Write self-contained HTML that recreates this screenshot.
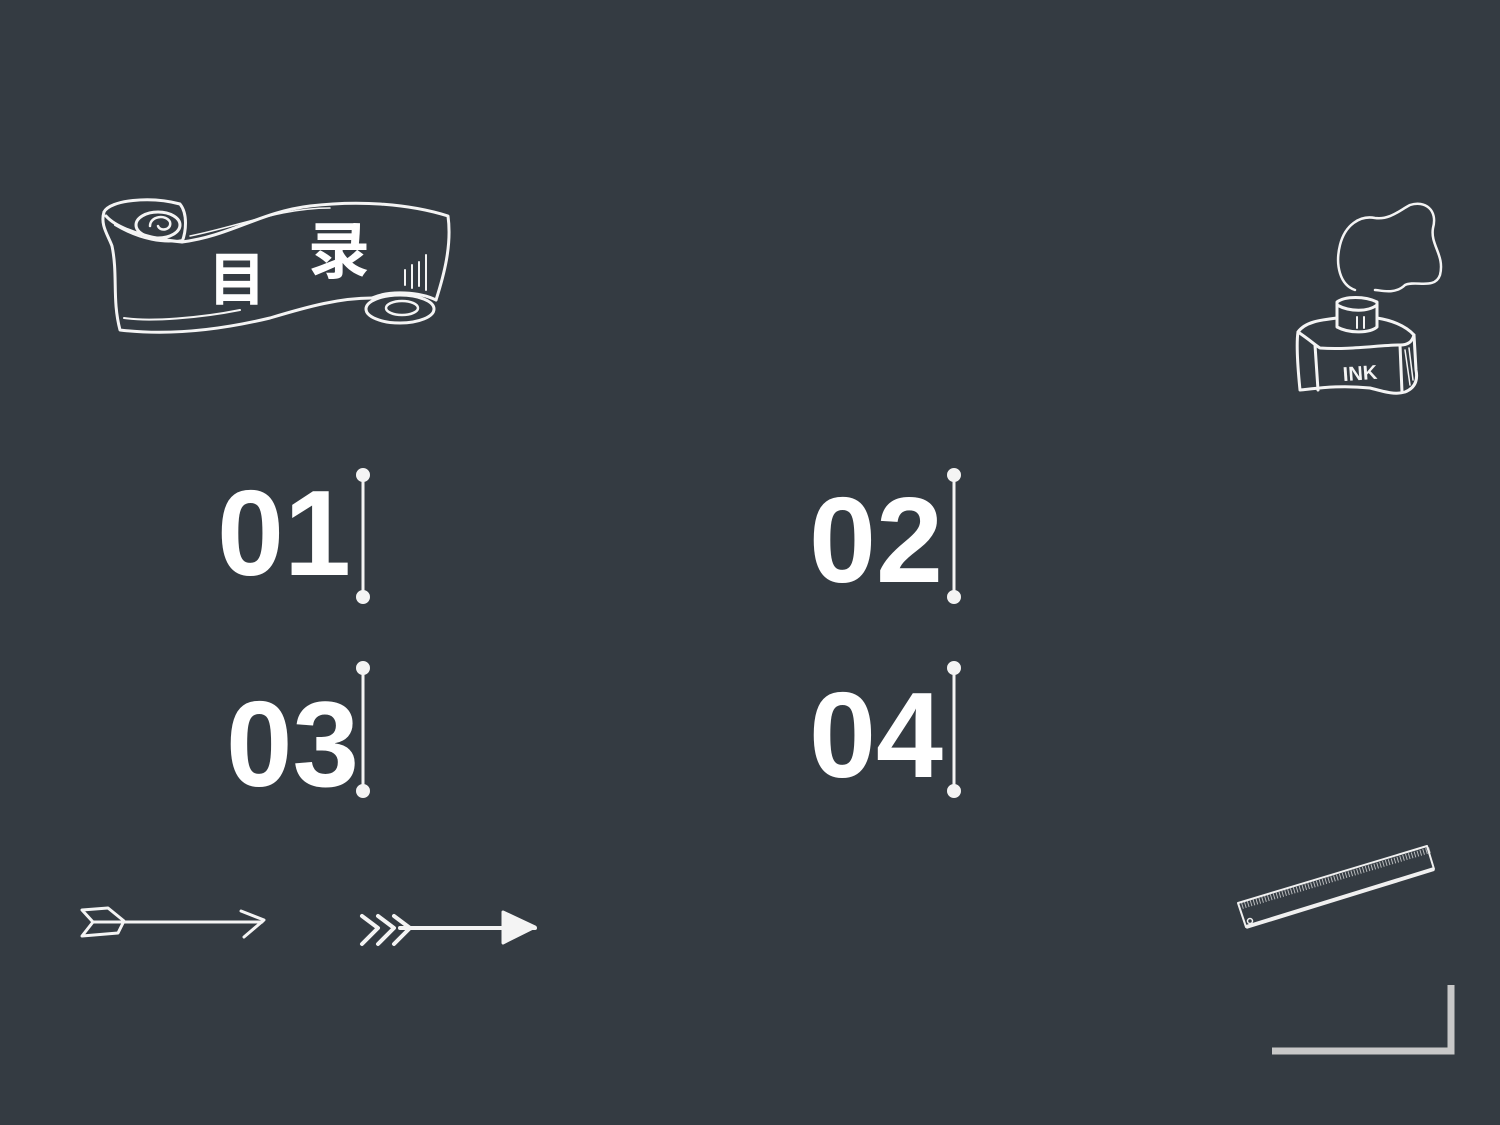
<!DOCTYPE html>
<html><head><meta charset="utf-8"><style>
html,body{margin:0;padding:0;background:#343b42;}
svg{display:block}
</style></head><body>
<svg width="1500" height="1125" viewBox="0 0 1500 1125" xmlns="http://www.w3.org/2000/svg">
<rect width="1500" height="1125" fill="#343b42"/>
<g fill="none" stroke="#f4f4f4" stroke-width="3" stroke-linecap="round" stroke-linejoin="round">
  <path d="M104 212 C 110 200 150 196 180 204 C 188 214 186 232 182 242 C 230 236 260 212 310 206 C 360 200 410 204 448 216 C 452 245 444 275 436 300"/>
  <path d="M104 212 C 100 225 108 235 112 246 C 118 275 112 300 120 330 C 170 336 220 330 270 318 C 310 306 340 298 372 298"/>
  <path d="M106 216 C 120 232 160 240 182 242"/>
  <path d="M115 225 C 140 240 165 244 183 240" stroke-width="2"/>
  <ellipse cx="158" cy="225" rx="22" ry="13"/>
  <path d="M150 226 C 150 216 166 214 170 222 C 172 230 160 232 158 226" stroke-width="2.5"/>
  <path d="M124 318 C 150 322 200 318 240 310" stroke-width="2"/>
  <ellipse cx="400" cy="309" rx="34" ry="14"/>
  <ellipse cx="402" cy="308" rx="16" ry="7" stroke-width="2.5"/>
  <path d="M372 298 C 390 290 420 292 436 300"/>
  <path d="M405 285 L405 270 M412 288 L412 265 M419 286 L419 262 M426 290 L426 255" stroke-width="2"/>
  <path d="M190 236 C 240 226 280 208 330 208" stroke-width="1.5"/>
  <path d="M1355 290 C 1340 285 1335 265 1340 245 C 1345 225 1360 215 1375 218 C 1390 220 1400 210 1410 205 C 1425 200 1438 210 1433 228 C 1430 245 1445 255 1440 275 C 1435 290 1415 280 1405 285 C 1395 295 1380 290 1375 290" stroke-width="2.5"/>
  <path d="M1337 302 L1337 327 C 1350 334 1370 333 1377 327 L1377 302 C 1365 296 1345 296 1337 302 Z"/>
  <path d="M1337 305 C 1350 312 1368 312 1377 305"/>
  <path d="M1357 317 L1357 328 M1364 317 L1364 328" stroke-width="2"/>
  <path d="M1337 318 C 1320 320 1305 322 1298 332 C 1296 345 1298 370 1300 390 C 1320 388 1340 385 1370 388 C 1385 392 1395 395 1405 392 C 1415 388 1418 380 1416 370 L1414 335 C 1405 325 1390 320 1377 318"/>
  <path d="M1298 332 C 1310 340 1315 345 1320 348 C 1350 350 1380 345 1400 345 C 1408 345 1412 342 1414 335"/>
  <path d="M1315 345 L1318 390 M1400 345 L1402 392"/>
  <path d="M1405 350 L1410 385 M1409 348 L1413 380" stroke-width="1.5"/>
</g>
<text x="1360" y="380" fill="#f4f4f4" font-family="Liberation Sans, sans-serif" font-weight="bold" font-size="20" text-anchor="middle" transform="rotate(-4 1360 373)">INK</text>
<text x="208" y="300" fill="#fff" font-family="'Liberation Sans','Noto Sans CJK SC',sans-serif" font-weight="bold" font-size="58">目</text>
<text x="308" y="273" fill="#fff" font-family="'Liberation Sans','Noto Sans CJK SC',sans-serif" font-weight="bold" font-size="62">录</text>
<g fill="#fff" font-family="'Liberation Sans',sans-serif" font-weight="bold" font-size="122">
  <text x="217" y="575" textLength="134" lengthAdjust="spacingAndGlyphs">01</text>
  <text x="809" y="582" textLength="134" lengthAdjust="spacingAndGlyphs">02</text>
  <text x="226" y="786" textLength="133" lengthAdjust="spacingAndGlyphs">03</text>
  <text x="809" y="777" textLength="134" lengthAdjust="spacingAndGlyphs">04</text>
</g>
<g stroke="#f4f4f4" stroke-width="3" fill="#f4f4f4">
  <line x1="363" y1="475" x2="363" y2="597"/><circle cx="363" cy="475" r="5.5"/><circle cx="363" cy="597" r="5.5"/>
  <line x1="954" y1="475" x2="954" y2="597"/><circle cx="954" cy="475" r="5.5"/><circle cx="954" cy="597" r="5.5"/>
  <line x1="363" y1="668" x2="363" y2="791"/><circle cx="363" cy="668" r="5.5"/><circle cx="363" cy="791" r="5.5"/>
  <line x1="954" y1="668" x2="954" y2="791"/><circle cx="954" cy="668" r="5.5"/><circle cx="954" cy="791" r="5.5"/>
</g>
<g fill="none" stroke="#f4f4f4" stroke-width="3" stroke-linecap="round" stroke-linejoin="round">
  <path d="M123 922 L262 922"/>
  <path d="M82 910 L108 908 L124 921 L118 933 L82 936 L93 922 Z"/>
  <path d="M93 922 L123 922"/>
  <path d="M241 911 L264 920 L244 937"/>
  <path d="M400 928 L535 928" stroke-width="4"/>
  <path d="M362 916 L378 928 L362 944 M378 916 L394 928 L378 944 M394 916 L410 928 L394 944" stroke-width="4"/>
  <path d="M503 912 L535 927 L503 943 Z" fill="#f4f4f4"/>
</g>
<g stroke="#f0f0f0" fill="none" stroke-linejoin="round">
  <path d="M1238 903 L1427 846 L1434 869 L1246 927 Z" stroke-width="2"/>
  <path d="M1246 927 L1434 869" stroke-width="4"/>
  <path d="M1242 906 L1430 850" stroke-width="6" stroke-dasharray="1 2" opacity="0.7"/>
  <circle cx="1250" cy="921" r="2.5" stroke-width="1.5"/>
</g>
<path d="M1272 1051 L1451 1051 L1451 985" fill="none" stroke="#c8c8c8" stroke-width="7"/>
</svg>
</body></html>
